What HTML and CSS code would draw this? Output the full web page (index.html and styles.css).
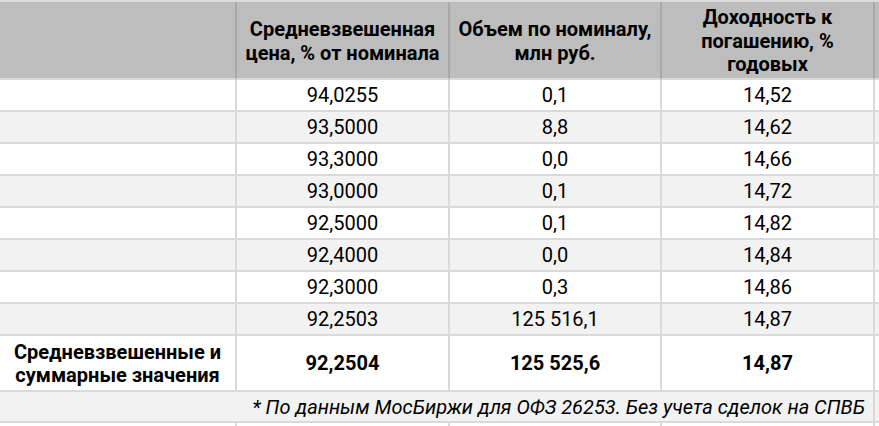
FILE: index.html
```html
<!DOCTYPE html>
<html lang="ru">
<head>
<meta charset="utf-8">
<title>ОФЗ 26253</title>
<link rel="stylesheet" href="styles.css">
</head>
<body>
<table class="grid">
  <colgroup>
    <col class="c1"><col class="c2"><col class="c3"><col class="c4"><col class="c5">
  </colgroup>
  <thead>
    <tr class="head">
      <th></th>
      <th>Средневзвешенная цена, % от номинала</th>
      <th>Объем по номиналу, млн руб.</th>
      <th>Доходность к погашению, % годовых</th>
      <th></th>
    </tr>
  </thead>
  <tbody>
    <tr><td></td><td>94,0255</td><td>0,1</td><td>14,52</td><td></td></tr>
    <tr class="alt"><td></td><td>93,5000</td><td>8,8</td><td>14,62</td><td></td></tr>
    <tr><td></td><td>93,3000</td><td>0,0</td><td>14,66</td><td></td></tr>
    <tr class="alt"><td></td><td>93,0000</td><td>0,1</td><td>14,72</td><td></td></tr>
    <tr><td></td><td>92,5000</td><td>0,1</td><td>14,82</td><td></td></tr>
    <tr class="alt"><td></td><td>92,4000</td><td>0,0</td><td>14,84</td><td></td></tr>
    <tr><td></td><td>92,3000</td><td>0,3</td><td>14,86</td><td></td></tr>
    <tr class="alt"><td></td><td>92,2503</td><td>125 516,1</td><td>14,87</td><td></td></tr>
    <tr class="total"><td class="label">Средневзвешенные и суммарные значения</td><td>92,2504</td><td>125 525,6</td><td>14,87</td><td></td></tr>
    <tr class="alt note"><td colspan="4">* По данным МосБиржи для ОФЗ 26253. Без учета сделок на СПВБ</td><td></td></tr>
    <tr><td></td><td></td><td></td><td></td><td></td></tr>
  </tbody>
</table>
</body>
</html>
```

FILE: styles.css
```css
html, body {
  margin: 0;
  padding: 0;
  background: #ffffff;
  overflow: hidden;
}

.grid {
  font-family: Roboto, "Noto Sans", sans-serif;
  font-size: 20px;
  color: #000;
  border-collapse: separate;
  border-spacing: 0;
  table-layout: fixed;
  width: 1100px;
  border-top: 2px solid #dcdcdc;
}

.c1 { width: 237px; }
.c2 { width: 213px; }
.c3 { width: 212px; }
.c4 { width: 213px; }
.c5 { width: 225px; }

.grid th,
.grid td {
  padding: 0 4px;
  border-right: 2px solid #dadada;
  border-bottom: 2px solid #dadada;
  text-align: center;
  vertical-align: middle;
  line-height: 22px;
  height: 32px;
  box-sizing: border-box;
}

.head th {
  background: #bdbdbd;
  font-weight: 700;
  height: 78px;
  padding-top: 3px;
  line-height: 23.5px;
  border-right-color: #a9a9a9;
  border-bottom-color: #dadada;
}

.alt td { background: #f2f2f2; }

.total td {
  font-weight: 700;
  height: 56px;
}

.total .label { line-height: 23px; padding-top: 1px; }

.note td {
  font-style: italic;
  text-align: right;
  height: 31px;
  padding-right: 8px;
}
```
